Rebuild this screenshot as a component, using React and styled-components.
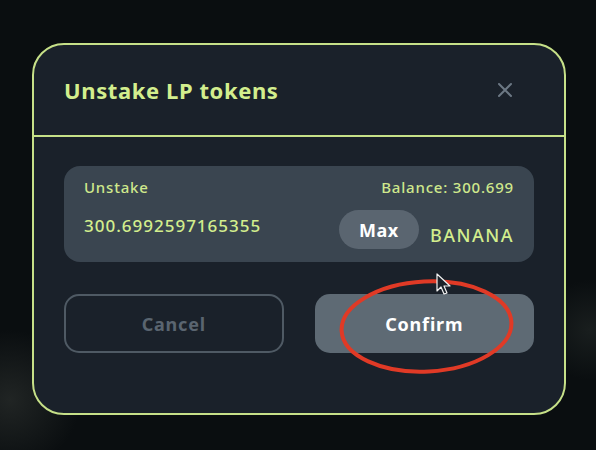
import React from 'react'
import styled, { createGlobalStyle } from 'styled-components'

const GlobalStyle = createGlobalStyle`
  html, body {
    margin: 0;
    padding: 0;
    height: 100%;
  }
  body {
    background:
      radial-gradient(circle at 10px 400px, rgba(60, 64, 60, 0.45), transparent 70px),
      radial-gradient(circle at 590px 330px, rgba(40, 46, 44, 0.5), transparent 50px),
      #0a0e10;
    font-family: "Noto Sans", "Open Sans", sans-serif;
    overflow: hidden;
  }
`

const Page = styled.div`
  position: relative;
  width: 596px;
  height: 450px;
  padding-top: 43px;
  box-sizing: border-box;
`

const Modal = styled.div`
  margin-left: 32px;
  width: 534px;
  height: 372px;
  box-sizing: border-box;
  border: 2px solid #c6e088;
  border-radius: 32px;
  background: #1a212a;
  display: flex;
  flex-direction: column;
`

const Header = styled.div`
  height: 90px;
  display: flex;
  align-items: center;
  justify-content: space-between;
  padding: 0 50px 0 30px;
  border-bottom: 2px solid #c6e088;
`

const Title = styled.h2`
  margin: 0;
  font-size: 22px;
  font-weight: 700;
  color: #d3ee8d;
  letter-spacing: 0.6px;
`

const Close = styled.button`
  background: none;
  border: none;
  padding: 0;
  width: 18px;
  height: 18px;
  cursor: pointer;
  display: flex;
`

const Body = styled.div`
  padding: 29px 30px 0 30px;
  display: flex;
  flex-direction: column;
  gap: 32px;
`

const Card = styled.div`
  height: 96px;
  box-sizing: border-box;
  border-radius: 16px;
  background: #3a4550;
  padding: 11px 20px 0 20px;
  display: flex;
  flex-direction: column;
`

const Row = styled.div`
  display: flex;
  align-items: ${({ $align }) => $align || 'center'};
  justify-content: space-between;
`

const Label = styled.span`
  font-size: 15px;
  font-weight: 500;
  color: #cfe88c;
  letter-spacing: 0.8px;
`

const Amount = styled.span`
  font-size: 17px;
  font-weight: 500;
  color: #d3ee8d;
  letter-spacing: 1px;
`

const Right = styled.div`
  display: flex;
  align-items: center;
  gap: 11px;
`

const MaxButton = styled.button`
  width: 80px;
  height: 39px;
  border: none;
  border-radius: 20px;
  background: #5a6570;
  color: #ffffff;
  font-family: inherit;
  font-size: 18px;
  font-weight: 700;
  letter-spacing: 0.5px;
  cursor: pointer;
`

const Token = styled.span`
  font-size: 18px;
  font-weight: 500;
  color: #d3ee8d;
  letter-spacing: 1.5px;
  margin-top: 10px;
`

const Buttons = styled.div`
  display: grid;
  grid-template-columns: 1fr 1fr;
  gap: 31px;
`

const ActionButton = styled.button`
  height: 59px;
  box-sizing: border-box;
  border-radius: 15px;
  font-family: inherit;
  font-size: 18px;
  font-weight: 700;
  letter-spacing: 0.8px;
  cursor: pointer;
  border: ${({ $primary }) => ($primary ? 'none' : '2px solid #4f5a64')};
  background: ${({ $primary }) => ($primary ? '#5e6a74' : 'transparent')};
  color: ${({ $primary }) => ($primary ? '#ffffff' : '#5a6570')};
`

const Overlay = styled.svg`
  position: absolute;
  left: 0;
  top: 0;
  pointer-events: none;
`

export default function App() {
  return (
    <>
      <GlobalStyle />
      <Page>
        <Modal>
          <Header>
            <Title>Unstake LP tokens</Title>
            <Close aria-label="close">
              <svg width="18" height="18" viewBox="0 0 18 18">
                <path d="M3 3 L15 15 M15 3 L3 15" stroke="#6c7884" strokeWidth="2" strokeLinecap="round" />
              </svg>
            </Close>
          </Header>
          <Body>
            <Card>
              <Row>
                <Label>Unstake</Label>
                <Label>Balance: 300.699</Label>
              </Row>
              <Row $align="flex-start">
                <Amount style={{ marginTop: 17 }}>300.6992597165355</Amount>
                <Right style={{ marginTop: 13 }}>
                  <MaxButton>Max</MaxButton>
                  <Token>BANANA</Token>
                </Right>
              </Row>
            </Card>
            <Buttons>
              <ActionButton>Cancel</ActionButton>
              <ActionButton $primary>Confirm</ActionButton>
            </Buttons>
          </Body>
        </Modal>
        <Overlay width="596" height="450" viewBox="0 0 596 450">
          <ellipse cx="426.5" cy="326.5" rx="85" ry="45" fill="none" stroke="#e03a26" strokeWidth="4" transform="rotate(-3 426.5 326.5)" />
          <path d="M437 274 L437 291 L441 287 L444 294 L447 293 L444 286 L450 286 Z" fill="#1c232a" stroke="#f2f2f2" strokeWidth="1.2" strokeLinejoin="round" />
        </Overlay>
      </Page>
    </>
  )
}
